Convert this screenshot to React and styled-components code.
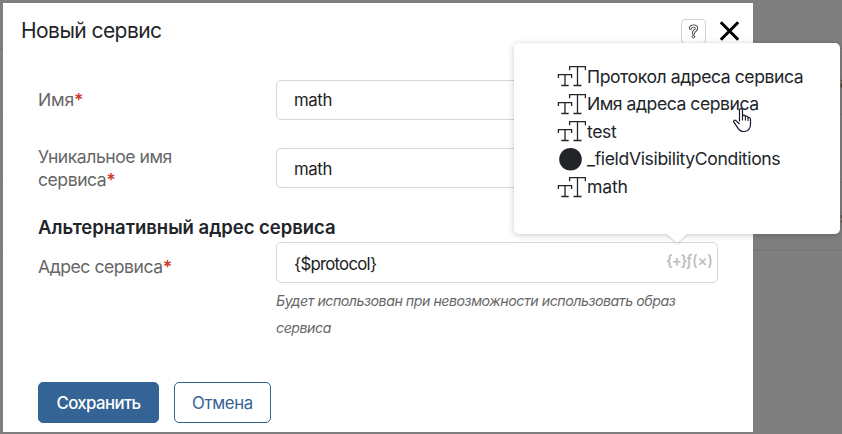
import React from 'react';
import styled, { createGlobalStyle } from 'styled-components';

const GlobalStyle = createGlobalStyle`
  * { box-sizing: border-box; }
  body { margin: 0; overflow: hidden; font-family: Inter, "Liberation Sans", sans-serif; color: #212529; }
`;

const Page = styled.div`
  position: relative;
  width: 842px;
  height: 434px;
  background: #7f7f7f;
  overflow: hidden;
`;

const PageRow = styled.div`
  display: flex;
  justify-content: flex-end;
  align-items: center;
  height: ${(p) => p.$height}px;
  border-bottom: 1px solid #747474;
  font-size: 16px;
  color: #3c3733;
`;

const Clipped = styled.span`
  width: 2px;
  overflow: hidden;
  white-space: nowrap;
`;

const Modal = styled.section`
  position: absolute;
  left: 3px;
  top: 3px;
  width: 750px;
  height: 429px;
  display: flex;
  flex-direction: column;
  background: #fff;
`;

const Header = styled.header`
  display: flex;
  align-items: center;
  flex: none;
  height: 56px;
  padding: 0 13px 0 18px;
`;

const Title = styled.h1`
  flex: 1;
  margin: 0;
  font-size: 21px;
  line-height: 28px;
  font-weight: 400;
  letter-spacing: -0.56px;
`;

const HelpButton = styled.button`
  display: flex;
  align-items: center;
  justify-content: center;
  width: 25px;
  height: 25px;
  margin-right: 13px;
  padding: 0;
  background: #fff;
  border: 1px solid #d4d4d4;
  border-radius: 4px;
`;

const CloseButton = styled.button`
  display: flex;
  padding: 0;
  border: 0;
  background: none;
`;

const Form = styled.form`
  display: flex;
  flex-direction: column;
  padding: 21px 35px 0;
`;

const Field = styled.div`
  display: grid;
  grid-template-columns: 238px 442px;
  align-items: ${(p) => (p.$top ? 'start' : 'center')};
  margin-bottom: ${(p) => p.$gap || 0}px;
`;

const Label = styled.label`
  width: 160px;
  padding-top: ${(p) => p.$offset || 0}px;
  padding-bottom: ${(p) => p.$lift || 0}px;
  font-size: 17.6px;
  line-height: 23px;
  letter-spacing: ${(p) => p.$spacing ?? -0.47}px;
  color: #666;
`;

const Required = styled.span`
  font-weight: 600;
  color: #d0392b;
`;

const InputBox = styled.div`
  display: flex;
  align-items: center;
  justify-content: space-between;
  height: ${(p) => p.$height || 40}px;
  padding: ${(p) => p.$drop || 0}px 7px 0 17px;
  border: 1px solid #d6d6d6;
  border-radius: 5px;
  background: #fff;
  font-size: 16.8px;
  line-height: 24px;
  letter-spacing: ${(p) => p.$spacing ?? -0.38}px;
  color: #212121;
`;

const InputTools = styled.span`
  display: flex;
  align-items: center;
  height: 24px;
  margin-top: -5px;
  color: #bdbdbd;
`;

const Braces = styled.span`
  width: 20px;
  font-size: 15px;
  font-weight: 600;
  letter-spacing: -1.1px;
`;

const Formula = styled.span`
  width: 24px;
  font-size: 15.5px;
  font-weight: 500;
  letter-spacing: -0.4px;
`;

const Heading = styled.h2`
  margin: 0 0 3px;
  font-size: 18.5px;
  line-height: 24px;
  font-weight: 600;
  letter-spacing: -0.03px;
`;

const Hint = styled.p`
  margin: 4px 0 0;
  font-size: 14.2px;
  font-style: italic;
  line-height: 27px;
  letter-spacing: -0.47px;
  color: #686868;
`;

const Footer = styled.footer`
  display: flex;
  gap: 15px;
  margin-top: auto;
  padding: 0 35px 9px;
`;

const Button = styled.button`
  width: ${(p) => p.$width}px;
  height: 41px;
  padding: 1px 0 0;
  border: 1px solid #346395;
  border-radius: 5px;
  background: ${(p) => (p.$primary ? '#346395' : '#fff')};
  color: ${(p) => (p.$primary ? '#fff' : '#346395')};
  font-family: inherit;
  font-size: 16.8px;
  font-weight: ${(p) => (p.$primary ? 500 : 400)};
  letter-spacing: ${(p) => (p.$primary ? -0.6 : -0.35)}px;
`;

const Popover = styled.div`
  position: absolute;
  left: 514px;
  top: 43px;
  width: 326px;
  height: 191px;
  padding: 19.5px 0 0 43px;
  border-radius: 5px;
  background: #fff;
  box-shadow: 0 1px 6px rgba(0, 0, 0, 0.22);

  &::after {
    content: '';
    position: absolute;
    left: 153px;
    top: 100%;
    border: 10px solid transparent;
    border-top: 9px solid #fff;
    border-bottom: 0;
    filter: drop-shadow(0 1px 1px rgba(0, 0, 0, 0.2));
  }
`;

const Options = styled.ul`
  display: flex;
  flex-direction: column;
  margin: 0;
  padding: 0;
  list-style: none;
`;

const Option = styled.li`
  display: flex;
  align-items: center;
  height: 27.6px;
  font-size: 17.6px;
  line-height: 27.6px;
  letter-spacing: ${(p) => p.$spacing ?? -0.38}px;
  white-space: nowrap;

  svg { flex: none; margin-right: 1px; }
`;

const Pointer = styled.svg`
  position: absolute;
  left: 732px;
  top: 107px;
`;

const TextIcon = () => (
  <svg width="29" height="24" viewBox="0 0 29 24" fill="none" stroke="#212529" strokeWidth="1.3">
    <path d="M1.4 14V10.7H14.6V14M8 10.7V21.5M4.3 21.5H11.7" />
    <path d="M12.6 6.2V2.6H28.4V6.2M20.5 2.6V21.5M16.5 21.5H24.5" />
  </svg>
);

const DotIcon = () => (
  <svg width="29" height="24" viewBox="0 0 29 24">
    <circle cx="13.5" cy="12.2" r="11.3" fill="#212529" />
  </svg>
);

const options = [
  { name: 'Протокол адреса сервиса', spacing: -0.43 },
  { name: 'Имя адреса сервиса', spacing: -0.47 },
  { name: 'test', spacing: -0.4 },
  { name: '_fieldVisibilityConditions', spacing: -0.36, dot: true },
  { name: 'math', spacing: -0.15 },
];

export default function App() {
  return (
    <Page>
      <GlobalStyle />
      <PageRow $height={49} />
      <PageRow $height={66}><Clipped>а</Clipped></PageRow>
      <PageRow $height={68} />
      <PageRow $height={68}><Clipped>s</Clipped></PageRow>

      <Modal>
        <Header>
          <Title>Новый сервис</Title>
          <HelpButton type="button" aria-label="Справка">
            <svg width="11" height="15" viewBox="0 0 11 15" fill="none" strokeLinecap="round">
              <path d="M2.5 4.2C2.5 1.2 8.6 1.2 8.5 4.6C8.4 6.8 5.4 6.6 5.4 9.2" stroke="#333" strokeWidth="3.2" />
              <path d="M2.5 4.2C2.5 1.2 8.6 1.2 8.5 4.6C8.4 6.8 5.4 6.6 5.4 9.2" stroke="#fff" strokeWidth="1.5" />
              <circle cx="5.4" cy="12.6" r="1.3" fill="#fff" stroke="#333" strokeWidth="0.9" />
            </svg>
          </HelpButton>
          <CloseButton type="button" aria-label="Закрыть">
            <svg width="21" height="22" viewBox="0 0 21 22" stroke="#000" strokeWidth="3">
              <path d="M1.8 2.3L19.2 19.7M19.2 2.3L1.8 19.7" />
            </svg>
          </CloseButton>
        </Header>

        <Form>
          <Field $gap={25}>
            <Label $spacing={-0.15} $lift={2}>Имя<Required>*</Required></Label>
            <InputBox>math</InputBox>
          </Field>
          <Field $gap={24}>
            <Label>Уникальное имя сервиса<Required>*</Required></Label>
            <InputBox $drop={2}>math</InputBox>
          </Field>
          <Heading>Альтернативный адрес сервиса</Heading>
          <Field $top>
            <Label $offset={13}>Адрес сервиса<Required>*</Required></Label>
            <div>
              <InputBox $height={41} $spacing={-0.75} $drop={2}>
                {'{$protocol}'}
                <InputTools>
                  <Braces>{'{+}'}</Braces>
                  <Formula>ƒ(×)</Formula>
                </InputTools>
              </InputBox>
              <Hint>Будет использован при невозможности использовать образ сервиса</Hint>
            </div>
          </Field>
        </Form>

        <Footer>
          <Button type="button" $primary $width={121}>Сохранить</Button>
          <Button type="button" $width={97}>Отмена</Button>
        </Footer>
      </Modal>

      <Popover>
        <Options>
          {options.map((o) => (
            <Option key={o.name} $spacing={o.spacing}>
              {o.dot ? <DotIcon /> : <TextIcon />}
              {o.name}
            </Option>
          ))}
        </Options>
      </Popover>

      <Pointer width="20" height="26" viewBox="0 0 20 26">
        <path
          d="M7.5 14.5V3.2C7.5 1 10.5 1 10.5 3.2V9.2C11.2 7.6 13.3 8 13.4 9.6C14.4 8.8 16 9.2 16 10.8C17 10 18.5 10.8 18.5 12.2V17C18.5 21.8 16 24.5 12 24.5C8.5 24.5 7 23 5.6 20.6L1.8 15.2C.9 13.7 2.7 12.4 4 13.6L7.5 17"
          fill="#fff" stroke="#15172b" strokeWidth="1.2" strokeLinejoin="round"
        />
        <path d="M10.5 9V13.5M13.4 9.6V13.5M16 10.8V14" stroke="#15172b" strokeWidth="1.1" />
      </Pointer>
    </Page>
  );
}
